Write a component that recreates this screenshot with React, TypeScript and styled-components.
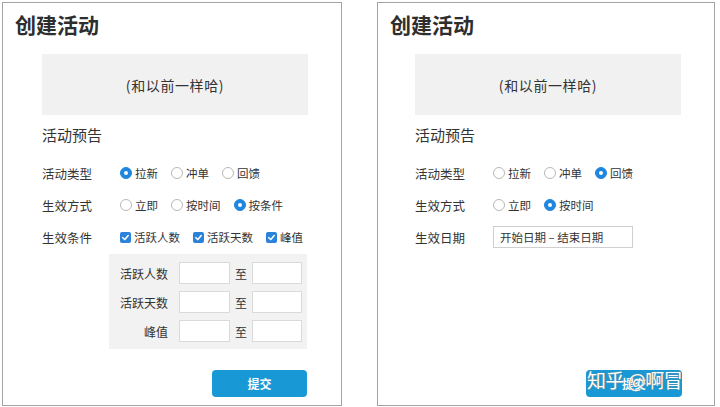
import React from "react";
import styled, { createGlobalStyle } from "styled-components";

const GlobalStyle = createGlobalStyle`
  html, body { margin: 0; padding: 0; background: #fff; }
  body {
    font-family: "Noto Sans CJK SC", "Noto Sans", sans-serif;
    color: #333;
  }
  * { box-sizing: border-box; }
`;

const Page = styled.div`
  display: flex;
  align-items: flex-start;
  gap: 35px;
  width: 720px;
  height: 407px;
  padding: 2px 0 0 2px;
`;

const Panel = styled.section<{ $w: number }>`
  position: relative;
  width: ${(p) => p.$w}px;
  height: 404px;
  border: 1px solid #a3a3a3;
  display: flex;
  flex-direction: column;
  padding-bottom: 8px;
`;

const Title = styled.h1`
  margin: 6px 0 0 12px;
  font-size: 21px;
  line-height: 30px;
  font-weight: 700;
  color: #2e2e2e;
`;

const Body = styled.div<{ $indent: number }>`
  padding-left: ${(p) => p.$indent}px;
  display: flex;
  flex-direction: column;
`;

const Notice = styled.div`
  margin-top: 15px;
  width: 266px;
  height: 61px;
  background: #f1f1f1;
  display: flex;
  align-items: center;
  justify-content: center;
  font-size: 14px;
  letter-spacing: 0.6px;
  color: #333;
`;

const SectionTitle = styled.h2`
  margin: 10px 0 12px;
  font-size: 15px;
  line-height: 20px;
  font-weight: 400;
  color: #333;
`;

const FormRow = styled.div`
  height: 32px;
  display: flex;
  align-items: center;
`;

const Label = styled.div`
  width: 78px;
  font-size: 12.5px;
  color: #333;
`;

const Options = styled.div`
  display: flex;
  align-items: center;
  gap: 13px;
`;

const Option = styled.label`
  display: flex;
  align-items: center;
  gap: 3px;
  font-size: 11.5px;
  color: #333;
`;

const RadioDot = styled.span<{ $on?: boolean }>`
  width: 12px;
  height: 12px;
  border-radius: 50%;
  position: relative;
  background: ${(p) => (p.$on ? "#1f86e0" : "#fff")};
  border: 1px solid ${(p) => (p.$on ? "#1f86e0" : "#b8b8b8")};
  &::after {
    content: "";
    display: ${(p) => (p.$on ? "block" : "none")};
    position: absolute;
    width: 4px;
    height: 4px;
    border-radius: 50%;
    background: #fff;
    left: 3px;
    top: 3px;
  }
`;

const CheckBox = styled.span`
  width: 11px;
  height: 11px;
  border-radius: 2px;
  background: #2a82da;
  display: flex;
  align-items: center;
  justify-content: center;
`;

const ConditionBox = styled.div`
  margin-left: 67px;
  margin-top: 1px;
  width: 198px;
  padding: 8px 5px 7px 11px;
  background: #f2f2f2;
  display: grid;
  grid-template-columns: 59px 51px 22px 50px;
  grid-auto-rows: 22px;
  row-gap: 7px;
  align-items: center;
`;

const CondLabel = styled.div`
  font-size: 12px;
  text-align: right;
  padding-right: 11px;
  color: #333;
`;

const To = styled.div`
  font-size: 12px;
  text-align: center;
  color: #333;
`;

const Field = styled.div`
  height: 22px;
  background: #fff;
  border: 1px solid #dadada;
`;

const DateField = styled.div`
  width: 140px;
  height: 22px;
  border: 1px solid #cfcfcf;
  background: #fff;
  font-size: 11.5px;
  line-height: 20px;
  padding-left: 6px;
  color: #333;
`;

const Submit = styled.button<{ $right: number; $w: number }>`
  margin-top: auto;
  align-self: flex-end;
  margin-right: ${(p) => p.$right}px;
  width: ${(p) => p.$w}px;
  height: 27px;
  border: none;
  border-radius: 4px;
  background: #1899d5;
  color: #fff;
  font-family: inherit;
  font-size: 12px;
  font-weight: 700;
`;

const Watermark = styled.div`
  position: absolute;
  left: 209px;
  top: 364px;
  font-size: 19px;
  line-height: 26px;
  color: #fff;
  letter-spacing: -0.5px;
  text-shadow: 0 0 1px #777, 0 0 1px #999;
  white-space: nowrap;
`;

const Check = () => (
  <svg width="9" height="9" viewBox="0 0 10 10">
    <path d="M2 5.2 L4.2 7.3 L8 2.8" fill="none" stroke="#fff" strokeWidth="1.7" strokeLinecap="round" strokeLinejoin="round" />
  </svg>
);

const Radio = ({ on, text }: { on?: boolean; text: string }) => (
  <Option>
    <RadioDot $on={on} />
    {text}
  </Option>
);

const Checked = ({ text }: { text: string }) => (
  <Option>
    <CheckBox>
      <Check />
    </CheckBox>
    {text}
  </Option>
);

export default function App() {
  const conds = ["活跃人数", "活跃天数", "峰值"];
  return (
    <>
      <GlobalStyle />
      <Page>
        <Panel $w={340}>
          <Title>创建活动</Title>
          <Body $indent={39}>
            <Notice>(和以前一样哈)</Notice>
            <SectionTitle>活动预告</SectionTitle>
            <FormRow>
              <Label>活动类型</Label>
              <Options>
                <Radio on text="拉新" />
                <Radio text="冲单" />
                <Radio text="回馈" />
              </Options>
            </FormRow>
            <FormRow>
              <Label>生效方式</Label>
              <Options>
                <Radio text="立即" />
                <Radio text="按时间" />
                <Radio on text="按条件" />
              </Options>
            </FormRow>
            <FormRow>
              <Label>生效条件</Label>
              <Options>
                <Checked text="活跃人数" />
                <Checked text="活跃天数" />
                <Checked text="峰值" />
              </Options>
            </FormRow>
            <ConditionBox>
              {conds.map((c) => (
                <React.Fragment key={c}>
                  <CondLabel>{c}</CondLabel>
                  <Field />
                  <To>至</To>
                  <Field />
                </React.Fragment>
              ))}
            </ConditionBox>
          </Body>
          <Submit $right={34} $w={95}>提交</Submit>
        </Panel>
        <Panel $w={338}>
          <Title>创建活动</Title>
          <Body $indent={37}>
            <Notice>(和以前一样哈)</Notice>
            <SectionTitle>活动预告</SectionTitle>
            <FormRow>
              <Label>活动类型</Label>
              <Options>
                <Radio text="拉新" />
                <Radio text="冲单" />
                <Radio on text="回馈" />
              </Options>
            </FormRow>
            <FormRow>
              <Label>生效方式</Label>
              <Options>
                <Radio text="立即" />
                <Radio on text="按时间" />
              </Options>
            </FormRow>
            <FormRow>
              <Label>生效日期</Label>
              <DateField>开始日期 – 结束日期</DateField>
            </FormRow>
          </Body>
          <Submit $right={32} $w={96}>提交</Submit>
          <Watermark>知乎 @啊冒</Watermark>
        </Panel>
      </Page>
    </>
  );
}
